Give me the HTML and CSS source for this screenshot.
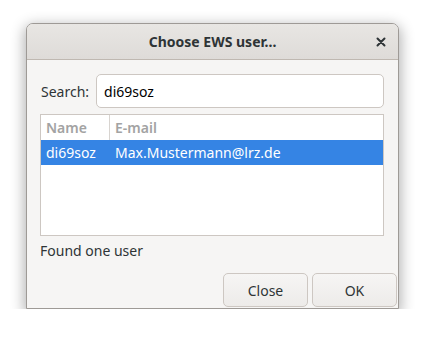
FILE: index.html
```html
<!DOCTYPE html>
<html lang="en">
<head>
  <meta charset="UTF-8" />
  <title>Choose EWS user...</title>
  <link rel="stylesheet" href="styles.css">
</head>
<body>

<div class="dialog">
  <div class="header-bar">
    <span class="title">Choose EWS user...</span>
    <span class="close-x">
      <svg width="10" height="10" viewBox="0 0 10 10"><path d="M1.5 1.5 L8.5 8.5 M8.5 1.5 L1.5 8.5" stroke="#2e3436" stroke-width="2" stroke-linecap="round"/></svg>
    </span>
  </div>

  <div class="content">
    <div class="search-row">
      <label for="search">Search:</label>
      <input type="text" id="search" value="di69soz" />
    </div>

    <div class="tree">
      <div class="tree-row tree-head">
        <div class="col-name">Name</div>
        <div class="col-mail">E-mail</div>
      </div>
      <div class="tree-row selected">
        <div class="col-name">di69soz</div>
        <div class="col-mail">Max.Mustermann@lrz.de</div>
      </div>
    </div>

    <p class="status">Found one user</p>
  </div>

  <div class="actions">
    <button class="button">Close</button>
    <button class="button">OK</button>
  </div>
</div>

</body>
</html>
```

FILE: styles.css
```css
* { margin: 0; padding: 0; box-sizing: border-box; }

body {
  font-family: 'Noto Sans', 'Open Sans', sans-serif;
  font-size: 14px;
  background: #ffffff;
  color: #2e3436;
}

.dialog {
  margin: 23px 0 0 26px;
  width: 373px;
  height: 286px;
  background: #f6f5f4;
  border: 1px solid #9e9a96;
  border-radius: 7px 7px 0 0;
  box-shadow: 0 4px 14px 2px rgba(0,0,0,0.3);
  display: flex;
  flex-direction: column;
}

.header-bar {
  height: 36px;
  flex: none;
  background: linear-gradient(#e8e6e3, #dedbd8);
  border-bottom: 1px solid #bfb8b1;
  border-radius: 6px 6px 0 0;
  display: flex;
  align-items: center;
  justify-content: center;
  position: relative;
}

.title {
  font-weight: 700;
  font-size: 14px;
  color: #2e3436;
}

.close-x {
  position: absolute;
  right: 12px;
  top: 13px;
  line-height: 0;
}

.content {
  flex: 1;
  padding: 14px 14px 0 13px;
}

.search-row {
  display: flex;
  align-items: center;
  gap: 7px;
  margin-left: 1px;
}

.search-row input {
  flex: 1;
  height: 34px;
  padding: 0 7px;
  font-family: inherit;
  font-size: 14px;
  color: #000;
  background: #fff;
  border: 1px solid #cdc7c2;
  border-radius: 5px;
  outline: none;
}

.tree {
  margin-top: 6px;
  height: 122px;
  background: #fff;
  border: 1px solid #cdc7c2;
}

.tree-row {
  display: flex;
  height: 25px;
  align-items: center;
}

.tree-head {
  color: #a3a3a3;
  font-weight: 600;
}

.tree-head .col-name {
  border-right: 1px solid #d8d4d0;
}

.col-name {
  width: 69px;
  height: 100%;
  padding-left: 5px;
  display: flex;
  align-items: center;
}

.col-mail {
  padding-left: 5px;
}

.selected {
  background: #3584e4;
  color: #fff;
}

.status {
  margin-top: 5px;
  height: 20px;
  line-height: 20px;
}

.actions {
  display: flex;
  justify-content: flex-end;
  gap: 4px;
  padding: 0 1px 1px 0;
}

.button {
  width: 85px;
  height: 34px;
  font-family: inherit;
  font-size: 14px;
  color: #2e3436;
  background: linear-gradient(#f6f5f4, #edebe9);
  border: 1px solid #cdc7c2;
  border-radius: 5px;
}
```
